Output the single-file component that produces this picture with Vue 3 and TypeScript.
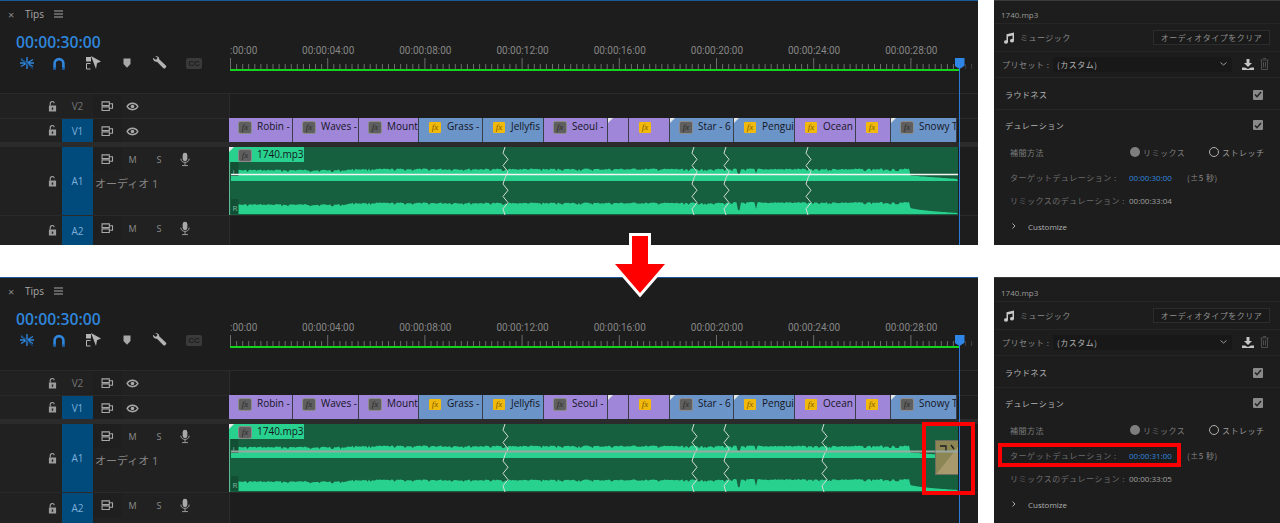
<script setup lang="ts">
interface Clip { name: string; start: number; end: number; tone: 'p' | 'b'; fx: '' | 'g' | 'y'; corner?: boolean }
interface Panel { id: string; late: boolean; target: string; remix: string; zigs: number[]; line: string; lineW: number; tail: boolean }

const clips: Clip[] = [
  { name: 'Robin -', start: 230, end: 294, tone: 'p', fx: 'g' },
  { name: 'Waves -', start: 294, end: 360, tone: 'p', fx: 'g' },
  { name: 'Mount', start: 360, end: 420, tone: 'p', fx: 'g' },
  { name: 'Grass -', start: 420, end: 484, tone: 'b', fx: 'y' },
  { name: 'Jellyfis', start: 484, end: 545, tone: 'b', fx: 'y' },
  { name: 'Seoul -', start: 545, end: 609, tone: 'p', fx: 'g' },
  { name: '', start: 609, end: 630, tone: 'p', fx: '', corner: true },
  { name: '', start: 630, end: 671, tone: 'p', fx: 'y' },
  { name: 'Star - 6', start: 671, end: 735, tone: 'b', fx: 'g', corner: true },
  { name: 'Pengui', start: 735, end: 796, tone: 'b', fx: 'y', corner: true },
  { name: 'Ocean', start: 796, end: 857, tone: 'p', fx: 'y' },
  { name: '', start: 857, end: 892, tone: 'p', fx: 'y' },
  { name: 'Snowy T', start: 892, end: 958, tone: 'b', fx: 'g', corner: true },
]

const panels: Panel[] = [
  { id: 'a', late: false, target: '00:00:30:00', remix: '00:00:33:04', zigs: [276, 465, 497, 579], line: '#f4f4f4', lineW: 1.5, tail: false },
  { id: 'b', late: true, target: '00:00:31:00', remix: '00:00:33:05', zigs: [276, 465, 497, 595], line: '#9aa8a2', lineW: 2, tail: true },
]

const labels = [':00:00', '00:00:04:00', '00:00:08:00', '00:00:12:00', '00:00:16:00', '00:00:20:00', '00:00:24:00', '00:00:28:00']

function ticks(): { x: number; h: number; o: number }[] {
  const out: { x: number; h: number; o: number }[] = []
  for (let i = 0; i * 6.075 < 745; i++) {
    const x = i * 6.075
    out.push({ x: +x.toFixed(1), h: i % 16 === 0 ? 11 : 5, o: x > 729 ? 0.45 : 1 })
  }
  return out
}
const tickList = ticks()

function wave(): { upper: string; lower: string } {
  let s = 17
  const rnd = () => { s = (s * 9301 + 49297) % 233280; return s / 233280 }
  const up: string[] = []
  const lo: string[] = []
  for (let x = 2; x <= 729; x += 1.5) {
    const n = rnd()
    const spike = n > 0.88 ? 2.4 : n * 1.6
    let a = 21.5 + spike
    let b = 55.5 + spike * 0.9 - (x > 500 ? 0.5 : 0)
    if (x < 120) { a += 1; b += 1.5 }
    if (Math.abs(x - 510) < 2) { a += 6; b += 8 }
    if (Math.abs(x - 527) < 1.5) { a += 5; b += 7 }
    if (x > 680) {
      const t = (x - 680) / 49
      a = 28.5 + t * 3.5
      b = 60 + Math.sqrt(t) * 6
    }
    up.push(`${x},${a.toFixed(1)}`)
    lo.push(`${x},${b.toFixed(1)}`)
  }
  return {
    upper: `M2,34 L${up.join(' L')} L729,34 Z`,
    lower: `M2,67 L${lo.join(' L')} L729,67 Z`,
  }
}
const w = wave()

function zig(x: number): string {
  const steps = [0, -2, 3, -2, 3, 0, -2, 3, -2, 3, -2, 0]
  return steps.map((d, i) => `${x + d},${(i * 68) / 11}`).join(' ')
}
</script>

<template>
  <div class="page">
    <svg class="sprite" width="0" height="0" aria-hidden="true">
      <symbol id="lock" viewBox="0 0 10 12">
        <path d="M2.5 5V3a2.2 2.2 0 0 1 4.4-.6" fill="none" stroke="currentColor" stroke-width="1.3" />
        <path fill-rule="evenodd" d="M1 5h8v6.5H1zM4.2 7v2.5h1.6V7z" fill="currentColor" />
      </symbol>
      <symbol id="patch" viewBox="0 0 14 11">
        <path d="M1 1h8v4H1zM1 6.5h8v4H1zM9 3h3.500v5H9" fill="none" stroke="currentColor" stroke-width="1.200" />
      </symbol>
      <symbol id="eye" viewBox="0 0 14 10">
        <path d="M1 5c2.500-4.700 9.500-4.700 12 0-2.500 4.700-9.500 4.700-12 0z" fill="none" stroke="currentColor" stroke-width="1.600" />
        <circle cx="7" cy="5" r="2" fill="currentColor" />
      </symbol>
      <symbol id="mic" viewBox="0 0 12 17">
        <rect x="3.200" y="0.500" width="5.600" height="10" rx="2.800" fill="currentColor" />
        <path d="M1 7.500c0 6 10 6 10 0M6 12.500v2.500M2.500 15.800h7" fill="none" stroke="currentColor" stroke-width="1.100" />
      </symbol>
    </svg>

    <section v-for="p in panels" :key="p.id" class="row" :class="{ late: p.late }">
      <div class="timeline">
        <div class="top">
          <div class="top-left">
            <div class="tab">
              <span class="close">×</span>
              <span class="tab-name">Tips</span>
              <svg class="menu" width="9" height="8" viewBox="0 0 9 8"><path d="M0 1h9M0 4h9M0 7h9" stroke="#a8a8a8" stroke-width="1" /></svg>
            </div>
            <div class="code">00:00:30:00</div>
            <div class="tools">
              <svg class="tool" width="16" height="14" viewBox="0 0 16 14">
                <g stroke="#2f86dc" stroke-width="1.400" fill="none">
                  <path d="M8 1v12M2 3.500l12 7M2 10.500l5-3M9 6.500l5-3M1 7h5M10 7h5" />
                </g>
                <path d="M2 2l12 11" stroke="#14426e" stroke-width="1.200" />
              </svg>
              <svg class="tool" width="12" height="13" viewBox="0 0 12 13">
                <path d="M1.600 12V6.500a4.400 4.400 0 0 1 8.800 0V12" fill="none" stroke="#2f86dc" stroke-width="2.600" />
                <path d="M0.300 10.500h2.600V13H0.300zM9.100 10.500h2.600V13H9.100z" fill="#1a5a9c" />
              </svg>
              <svg class="tool" width="15" height="14" viewBox="0 0 15 14">
                <path d="M0 1h5v4.500H0z" fill="#b4b4b4" />
                <path d="M0.500 7.500h4M0.500 7.500v5.500h4" fill="none" stroke="#b4b4b4" stroke-width="1" />
                <path d="M5 0l10 5.500-4 1.800L10 13 5 0z" fill="#b4b4b4" />
              </svg>
              <svg class="tool" width="8" height="10" viewBox="0 0 8 10"><path d="M0.500 0.500h7V6L4 9.800 0.500 6z" fill="#a8a8a8" /></svg>
              <svg class="tool" width="15" height="14" viewBox="0 0 15 14">
                <path d="M1 1.700l2.400 2 1.700-.6.300-1.600L3.200.6c2-1 4.200.4 4 2.700l6.600 6.300c1 1 .3 1.600 0 2l-.6.600c-.5.500-1.200.6-1.800 0L5 5.700C2.800 6.300.5 4 1 1.700z" fill="#b4b4b4" />
              </svg>
              <span class="cc">CC</span>
            </div>
          </div>
          <div class="ruler">
            <div class="labels">
              <span v-for="l in labels" :key="l" class="label">{{ l }}</span>
            </div>
            <svg class="ticks" width="748" height="11" viewBox="0 0 748 11">
              <line v-for="t in tickList" :key="t.x" :x1="t.x + 0.5" :x2="t.x + 0.5" :y1="11 - t.h" y2="11" stroke="#6c6c6c" :stroke-opacity="t.o" />
            </svg>
            <div class="work"></div>
          </div>
        </div>

        <div class="track v2">
          <div class="thead">
            <div class="lock"><svg width="9" height="11"><use href="#lock" /></svg></div>
            <div class="tid">V2</div>
            <div class="ctrl">
              <span class="c1"><svg width="13" height="10"><use href="#patch" /></svg></span>
              <span class="c2"><svg width="13" height="9"><use href="#eye" /></svg></span>
            </div>
          </div>
          <div class="lane"></div>
        </div>

        <div class="track v1">
          <div class="thead">
            <div class="lock"><svg width="9" height="11"><use href="#lock" /></svg></div>
            <div class="tid on">V1</div>
            <div class="ctrl">
              <span class="c1"><svg width="13" height="10"><use href="#patch" /></svg></span>
              <span class="c2"><svg width="13" height="9"><use href="#eye" /></svg></span>
            </div>
          </div>
          <div class="lane clips">
            <div
              v-for="c in clips"
              :key="c.start"
              class="clip"
              :class="c.tone"
              :style="{ width: c.end - c.start + 'px' }"
            >
              <i v-if="c.corner" class="corner"></i>
              <span v-if="c.fx" class="fx" :class="c.fx">fx</span>
              <span v-if="c.name" class="clip-name">{{ c.name }}</span>
            </div>
          </div>
        </div>

        <div class="divider"></div>

        <div class="track a1">
          <div class="thead">
            <div class="lock"><svg width="9" height="11"><use href="#lock" /></svg></div>
            <div class="tid on">A1</div>
            <div class="ctrl-wrap">
              <div class="ctrl">
                <span class="c1"><svg width="13" height="10"><use href="#patch" /></svg></span>
                <span class="c2 letter">M</span>
                <span class="c3 letter">S</span>
                <span class="c4"><svg width="10" height="15"><use href="#mic" /></svg></span>
              </div>
              <div class="track-name">オーディオ 1</div>
            </div>
          </div>
          <div class="lane audio">
            <svg class="wave" width="729" height="68" viewBox="0 0 729 68">
              <path :d="w.upper" fill="#29d18e" />
              <path :d="w.lower" fill="#29d18e" />
              <rect x="0" y="0" width="1" height="68" fill="#5fb794" />
              <rect x="2" y="15" width="7.500" height="14" fill="#124f35" />
              <rect x="2" y="52" width="7.500" height="15" fill="#124f35" />
              <text x="3.500" y="28" class="ch">L</text>
              <text x="3.500" y="64" class="ch">R</text>
              <polyline v-for="z in p.zigs" :key="z" :points="zig(z)" fill="none" stroke="#d4dcd8" stroke-width="1" />
              <rect x="2" :y="27.500 - p.lineW / 2" width="727" :height="p.lineW" :fill="p.line" />
              <g v-if="p.tail">
                <rect x="706" y="16" width="23" height="35" fill="#8c8655" />
                <path d="M707 50.500L729 23V50.500Z" fill="#a89a6c" />
                <path d="M706.500 51V16.500H729M706.500 50.500H729" fill="none" stroke="#6d6d60" />
                <path d="M711 22h6v5M722 21l3 4" fill="none" stroke="#1d1d1d" stroke-width="1.300" />
                <rect x="706.500" y="26.500" width="22.500" height="2" fill="#9aa8a2" />
              </g>
            </svg>
            <div class="audio-head">
              <i class="corner"></i>
              <span class="fx g">fx</span>
              <span class="clip-name">1740.mp3</span>
            </div>
          </div>
        </div>

        <div class="track a2">
          <div class="thead">
            <div class="lock"><svg width="9" height="11"><use href="#lock" /></svg></div>
            <div class="tid on">A2</div>
            <div class="ctrl">
              <span class="c1"><svg width="13" height="10"><use href="#patch" /></svg></span>
              <span class="c2 letter">M</span>
              <span class="c3 letter">S</span>
              <span class="c4"><svg width="10" height="15"><use href="#mic" /></svg></span>
            </div>
          </div>
          <div class="lane"></div>
        </div>

        <div class="playhead"><i class="head"></i></div>
        <div v-if="p.late" class="red-box"></div>
      </div>

      <aside class="side">
        <div class="s-title">1740.mp3</div>
        <div class="s-row music">
          <svg width="12" height="12" viewBox="0 0 12 12"><path d="M3.500 2.200L11 .5v8.200a2 1.700 0 1 1-1.500-1.600V3.500L5 4.500v5.400a2 1.700 0 1 1-1.500-1.600z" fill="#c8c8c8" /></svg>
          <span class="music-name">ミュージック</span>
          <span class="clear">オーディオタイプをクリア</span>
        </div>
        <div class="s-row preset">
          <span class="preset-label">プリセット :</span>
          <div class="select">
            <span>(カスタム)</span>
            <svg width="7" height="4" viewBox="0 0 7 4"><path d="M.5.500l3 2.500 3-2.500" fill="none" stroke="#999" /></svg>
          </div>
          <svg class="save" width="12" height="11" viewBox="0 0 12 11"><path d="M4.500 0h3v4H10L6 8 2 4h2.500zM0 8.500h3L6 10l3-1.500h3V11H0z" fill="#c4c4c4" /></svg>
          <svg class="trash" width="9" height="12" viewBox="0 0 9 12"><path d="M3 .500h3M.500 2h8M1.500 2v9.500h6V2M3.500 4v5.500M5.500 4v5.500" fill="none" stroke="#4d4d4d" /></svg>
        </div>
        <div class="s-row section loud">
          <span>ラウドネス</span>
          <span class="check"><svg width="8" height="7" viewBox="0 0 8 7"><path d="M1 3.500l2 2.200L7 1" fill="none" stroke="#222" stroke-width="1.500" /></svg></span>
        </div>
        <div class="section dur">
          <span>デュレーション</span>
          <span class="check"><svg width="8" height="7" viewBox="0 0 8 7"><path d="M1 3.500l2 2.200L7 1" fill="none" stroke="#222" stroke-width="1.500" /></svg></span>
        </div>
        <div class="field method">
          <span class="f-label">補間方法</span>
          <span class="radio fill"></span><span class="r-text">リミックス</span>
          <span class="radio hollow"></span><span class="r-text">ストレッチ</span>
        </div>
        <div class="field target" :class="{ hl: p.late }">
          <span class="f-label">ターゲットデュレーション :</span>
          <span class="value blue">{{ p.target }}</span>
          <span class="range">(±5 秒)</span>
        </div>
        <div class="field">
          <span class="f-label">リミックスのデュレーション :</span>
          <span class="value">{{ p.remix }}</span>
        </div>
        <div class="custom">
          <svg width="4" height="6" viewBox="0 0 4 6"><path d="M.5.500L3 3 .5 5.500" fill="none" stroke="#aaa" /></svg>
          <span>Customize</span>
        </div>
      </aside>
    </section>

    <svg class="arrow" width="60" height="66" viewBox="0 0 60 66">
      <polygon points="23,3 39,3 39,31 56,31 31,60 6,31 23,31" fill="#fe0000" stroke="#fff" stroke-width="6" paint-order="stroke" stroke-miterlimit="6" />
    </svg>
  </div>
</template>

<style>
html, body { margin: 0; background: #fff; }
</style>

<style scoped>
.page {
  position: relative;
  width: 1280px;
  height: 523px;
  overflow: hidden;
  background: #fff;
  display: flex;
  flex-direction: column;
  gap: 32px;
  font-family: "Open Sans", "Noto Sans CJK JP", sans-serif;
}
.sprite { position: absolute; }
.row { display: flex; gap: 16px; height: 245px; flex: none; }
.row.late { height: 246px; }

.timeline {
  position: relative;
  width: 978px;
  background: #1d1d1d;
  border-top: 1px solid #1c5a9e;
  display: flex;
  flex-direction: column;
  overflow: hidden;
}
.top { height: 92px; flex: none; display: flex; }
.top-left { width: 229px; flex: none; border-right: 1px solid #1d1d1d; }
.tab { height: 26px; display: flex; align-items: center; padding-left: 8px; color: #a8a8a8; font-size: 10px; }
.close { font-size: 11px; color: #8a8a8a; width: 17px; }
.tab-name { width: 29px; font-family: "Open Sans", sans-serif; }
.code { margin: 5px 0 0 16px; height: 20px; line-height: 20px; font-size: 15.700px; font-weight: 600; color: #2f86dc; }
.tools { display: flex; align-items: center; height: 20px; margin-top: 1px; }
.tool { flex: none; }
.tools > :nth-child(1) { margin-left: 19px; }
.tools > :nth-child(2) { margin-left: 18px; }
.tools > :nth-child(3) { margin-left: 21px; }
.tools > :nth-child(4) { margin-left: 22px; }
.tools > :nth-child(5) { margin-left: 21px; }
.cc {
  margin-left: 19px;
  width: 16px;
  height: 11px;
  line-height: 11px;
  text-align: center;
  font: 700 8px/11px "Liberation Sans", sans-serif;
  background: #3a3a3a;
  color: #1d1d1d;
  border-radius: 2px;
}

.ruler { flex: 1; min-width: 0; overflow: hidden; }
.labels { display: flex; height: 13px; margin-top: 43px; }
.label { flex: none; width: 97.200px; text-align: center; font: 10px/13px Roboto, sans-serif; color: #868686; }
.label:first-child { width: 49.600px; text-align: left; }
.ticks { display: block; margin-top: 1px; }
.work { width: 729px; height: 2px; background: #14d31c; }

.track { display: flex; flex: none; border-top: 1px solid #2a2a2a; }
.v2 { height: 24px; }
.v1 { height: 23px; }
.a1 { height: 68px; border-top: 0; }
.a2 { height: 30px; flex: 1; }
.divider { height: 5px; background: #2b2b2b; flex: none; }
.thead { width: 229px; flex: none; display: flex; background: #212121; color: #a8a8a8; }
.lock { width: 62px; padding-left: 43px; box-sizing: border-box; display: flex; align-items: center; justify-content: center; color: #9c9c9c; }
.tid { width: 31px; flex: none; display: flex; align-items: center; justify-content: center; font-size: 10px; color: #747474; }
.tid.on { background: #004a7c; color: #7eaed8; }
.lane { flex: 1; min-width: 0; border-left: 1px solid #2c2c2c; }
.ctrl { display: flex; height: 24px; }
.ctrl > span { display: flex; align-items: center; justify-content: center; }
.c1 { width: 29px; background: #1f1f1f; }
.c2 { width: 21px; }
.c3 { width: 32px; }
.c4 { width: 20px; }
.letter { font-size: 9px; color: #8c8c8c; }
.track-name { margin: 5px 0 0 2px; font-size: 11px; line-height: 16px; color: #858585; }

.clips { display: flex; border-left: 0; margin-top: -1px; height: 24px; flex: none; }
.clip {
  position: relative;
  box-sizing: border-box;
  flex: none;
  height: 24px;
  padding-left: 10px;
  border-right: 1px solid #3a3f4a;
  display: flex;
  align-items: center;
  overflow: hidden;
  font-size: 10px;
}
.clip.p { background: #a086d8; }
.clip.b { background: #6b94c8; }
.fx {
  flex: none;
  box-sizing: border-box;
  width: 12px;
  height: 11px;
  margin-top: -6px;
  font: italic 9px/11px "Liberation Serif", serif;
  text-align: center;
  border-radius: 1px;
}
.fx.g { background: #5f5f5f; color: #2a2a2a; outline: 1px solid #8a8a8a; }
.fx.y { background: #f0b90c; color: #7a5a00; }
.clip-name { flex: none; margin: -9px 0 0 6px; color: #14141e; line-height: 14px; }
.corner {
  position: absolute;
  left: 0;
  top: 0;
  width: 5px;
  height: 5px;
  background: #e8e8e8;
  clip-path: polygon(0 0, 100% 0, 0 100%);
}
.audio { position: relative; background: #17603f; height: 68px; flex: none; width: 729px; border-left: 0; }
.wave { position: absolute; left: 0; top: 0; display: block; }
.ch { font-size: 8px; fill: #79b99c; font-family: "Open Sans", sans-serif; }
.audio-head {
  position: relative;
  width: 75px;
  height: 15px;
  padding-left: 10px;
  box-sizing: border-box;
  background: #29d18e;
  display: flex;
  align-items: center;
  font-size: 10px;
}
.audio-head .clip-name { margin-top: -1px; }
.audio-head .fx { margin-top: 1px; }

.playhead { position: absolute; left: 959px; top: 57px; bottom: 0; width: 1px; background: #2a7ad6; }
.head {
  position: absolute;
  left: -4.500px;
  top: 0;
  width: 10px;
  height: 11px;
  background: #2f86e6;
  clip-path: polygon(0 0, 100% 0, 100% 70%, 50% 100%, 0 70%);
}
.red-box {
  position: absolute;
  left: 922px;
  top: 144px;
  width: 53px;
  height: 73px;
  box-sizing: border-box;
  border: 4px solid #fe0000;
}

.side {
  flex: 1;
  min-width: 0;
  background: #1d1d1d;
  border-top: 1px solid #3a3a3a;
  font-family: "Noto Sans CJK JP", sans-serif;
  font-size: 8px;
  letter-spacing: 0.500px;
  color: #8a8a8a;
  box-sizing: border-box;
}
.late .side { padding-top: 1px; }
.s-title { height: 22px; padding-left: 7px; font: 8px/28px "Open Sans", sans-serif; letter-spacing: 0; color: #9a9a9a; border-bottom: 1px solid #262626; }
.s-row { display: flex; align-items: center; border-bottom: 1px solid #262626; box-sizing: border-box; }
.music { height: 28px; padding-left: 9px; }
.music-name { margin-left: 5px; width: 133px; }
.clear {
  width: 117px;
  height: 15px;
  line-height: 14px;
  box-sizing: border-box;
  text-align: center;
  border: 1px solid #2c2c2c;
  background: #1a1a1a;
  color: #8f8f8f;
}
.preset { height: 26px; padding: 0 0 1px 8px; }
.preset-label { width: 51px; flex: none; }
.select {
  width: 179px;
  height: 15px;
  flex: none;
  box-sizing: border-box;
  background: #181818;
  display: flex;
  align-items: center;
  justify-content: space-between;
  padding: 0 5px 0 4px;
  color: #b4b4b4;
}
.save { margin-left: 10px; }
.trash { margin-left: 6px; }
.section { display: flex; align-items: center; justify-content: space-between; padding: 0 17px 0 11px; color: #b4b4b4; font-size: 8px; box-sizing: border-box; }
.loud { height: 32px; padding-top: 2px; border-bottom: 1px solid #262626; }
.dur { height: 30px; }
.check {
  width: 10px;
  height: 10px;
  background: #8a8a8a;
  border-radius: 1px;
  display: flex;
  align-items: center;
  justify-content: center;
}
.field { position: relative; box-sizing: border-box; display: flex; align-items: center; height: 24px; padding-left: 16px; }
.target { padding-top: 2px; }
.f-label { width: 119px; flex: none; white-space: nowrap; color: #6e6e6e; }
.method .f-label { width: 118px; color: #7c7c7c; }
.radio { width: 10px; height: 10px; border-radius: 50%; box-sizing: border-box; flex: none; }
.fill { background: #7e7e7e; margin-left: 2px; }
.hollow { border: 1.500px solid #b0b0b0; margin-left: 22px; }
.r-text { margin-left: 3px; width: 44px; color: #7c7c7c; white-space: nowrap; }
.r-text:last-child { color: #9a9a9a; }
.value { font: 8px "Open Sans", sans-serif; letter-spacing: 0; color: #a0a0a0; width: 58px; flex: none; }
.blue { color: #2f86dc; }
.range { color: #8a8a8a; }
.hl::after {
  content: "";
  position: absolute;
  left: 4px;
  top: 1px;
  width: 183px;
  height: 24px;
  box-sizing: border-box;
  border: 4px solid #fe0000;
}
.custom { display: flex; align-items: center; height: 24px; margin-top: 2px; padding-left: 18px; color: #b0b0b0; font: 8px "Open Sans", sans-serif; letter-spacing: 0; }
.custom span { margin-left: 12px; }

.arrow { position: absolute; left: 609px; top: 233px; }
</style>
